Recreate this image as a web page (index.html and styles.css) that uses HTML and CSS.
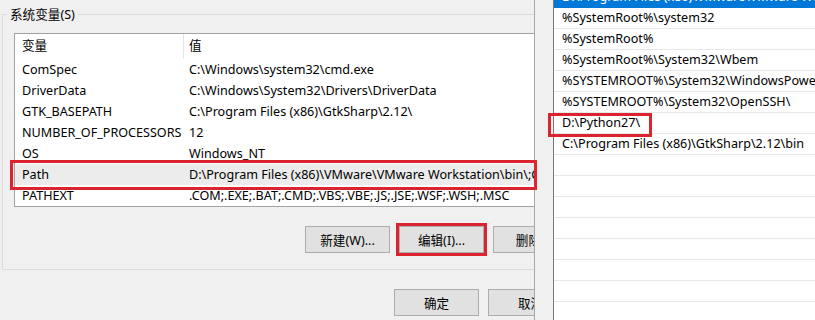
FILE: index.html
```html
<!DOCTYPE html>
<html lang="zh-CN">
<head>
    <meta charset="UTF-8">
    <title>环境变量</title>
    <link rel="stylesheet" href="styles.css">
</head>
<body>
    <div class="env-dialog">
        <div class="group">
            <span class="group-title">系统变量(S)</span>
            <div class="var-list">
                <div class="var-row var-head">
                    <span class="var-name">变量</span>
                    <span class="var-value">值</span>
                </div>
                <div class="var-row"><span class="var-name">ComSpec</span><span class="var-value">C:\Windows\system32\cmd.exe</span></div>
                <div class="var-row"><span class="var-name">DriverData</span><span class="var-value">C:\Windows\System32\Drivers\DriverData</span></div>
                <div class="var-row"><span class="var-name">GTK_BASEPATH</span><span class="var-value">C:\Program Files (x86)\GtkSharp\2.12\</span></div>
                <div class="var-row"><span class="var-name">NUMBER_OF_PROCESSORS</span><span class="var-value">12</span></div>
                <div class="var-row"><span class="var-name">OS</span><span class="var-value">Windows_NT</span></div>
                <div class="var-row is-current"><span class="var-name">Path</span><span class="var-value">D:\Program Files (x86)\VMware\VMware Workstation\bin\;C:\Windows\system32</span></div>
                <div class="var-row"><span class="var-name">PATHEXT</span><span class="var-value">.COM;.EXE;.BAT;.CMD;.VBS;.VBE;.JS;.JSE;.WSF;.WSH;.MSC</span></div>
            </div>
            <div class="btn-row group-buttons">
                <button>新建(W)...</button>
                <button>编辑(I)...</button>
                <button>删除(L)</button>
            </div>
        </div>
        <div class="btn-row dialog-buttons">
            <button>确定</button>
            <button>取消</button>
        </div>
    </div>

    <div class="edit-dialog">
        <div class="path-list">
            <div class="path-row is-selected">D:\Program Files (x86)\VMware\VMware Workstation\bin</div>
            <div class="path-row">%SystemRoot%\system32</div>
            <div class="path-row">%SystemRoot%</div>
            <div class="path-row">%SystemRoot%\System32\Wbem</div>
            <div class="path-row">%SYSTEMROOT%\System32\WindowsPowerShell\v1.0\</div>
            <div class="path-row">%SYSTEMROOT%\System32\OpenSSH\</div>
            <div class="path-row">D:\Python27\</div>
            <div class="path-row">C:\Program Files (x86)\GtkSharp\2.12\bin</div>
            <div class="path-row"></div>
            <div class="path-row"></div>
            <div class="path-row"></div>
            <div class="path-row"></div>
            <div class="path-row"></div>
            <div class="path-row"></div>
            <div class="path-row"></div>
        </div>
    </div>

    <!-- red marks drawn on top of the screenshot -->
    <div class="mark mark-path"></div>
    <div class="mark mark-edit"></div>
    <div class="mark mark-python"></div>
</body>
</html>
```

FILE: styles.css
```css
* {
    box-sizing: border-box;
}
body {
    margin: 0;
    width: 815px;
    height: 320px;
    overflow: hidden;
    position: relative;
    display: flex;
    background: #f0f0f0;
    color: #000;
    font-family: "Noto Sans", "Noto Sans CJK SC", sans-serif;
    font-size: 12.6px;
}
.env-dialog {
    width: 534px;
    flex: none;
    height: 320px;
    overflow: hidden;
}
.group {
    width: 560px;
    margin: 14px 0 0 2px;
    padding: 0 0 16px 0;
    border: 1px solid #dcdcdc;
    border-right: none;
}
.group-title {
    display: block;
    width: max-content;
    height: 17px;
    line-height: 17px;
    margin: -9px 0 0 4px;
    padding: 0 3px;
    background: #f0f0f0;
}
.var-list {
    margin: 10px 0 0 11px;
    width: 525px;
    height: 174px;
    border: 1px solid #a3a3a3;
    background: #fff;
    overflow: hidden;
}
.var-row {
    display: flex;
    height: 21px;
    line-height: 21px;
    white-space: nowrap;
}
.var-head {
    height: 25px;
    line-height: 24px;
}
.var-name {
    width: 168px;
    flex: none;
    padding-left: 7px;
}
.var-value {
    padding-left: 6px;
}
.var-head .var-value {
    border-left: 1px solid #e5e5e5;
    padding-left: 5px;
}
.var-row.is-current {
    background: #ececec;
}
.btn-row {
    display: flex;
    gap: 9px;
}
.btn-row button {
    width: 85px;
    height: 27px;
    flex: none;
    padding: 0;
    border: 1px solid #adadad;
    background: #e1e1e1;
    font: inherit;
    color: #000;
}
.group-buttons {
    margin: 19px 0 0 302px;
}
.dialog-buttons {
    margin: 19px 0 0 394px;
}
.edit-dialog {
    flex: 1;
    height: 320px;
    border-left: 1px solid #a8a8a8;
    padding-left: 18px;
    overflow: hidden;
}
.path-list {
    height: 340px;
    margin-top: -13px;
    border-left: 1px solid #7a7a7a;
    background: #fff;
}
.path-row {
    height: 21px;
    line-height: 20px;
    padding-left: 8px;
    border-bottom: 1px solid #e8e8e8;
    white-space: nowrap;
}
.path-row.is-selected {
    background: #0078d7;
    color: #fff;
    border-bottom-color: #0078d7;
}
.mark {
    position: absolute;
    border: 3px solid #dc2430;
}
.mark-path {
    left: 10px;
    top: 160px;
    width: 527px;
    height: 30px;
}
.mark-edit {
    left: 396px;
    top: 223px;
    width: 91px;
    height: 33px;
}
.mark-python {
    left: 548px;
    top: 113px;
    width: 104px;
    height: 24px;
}
```
